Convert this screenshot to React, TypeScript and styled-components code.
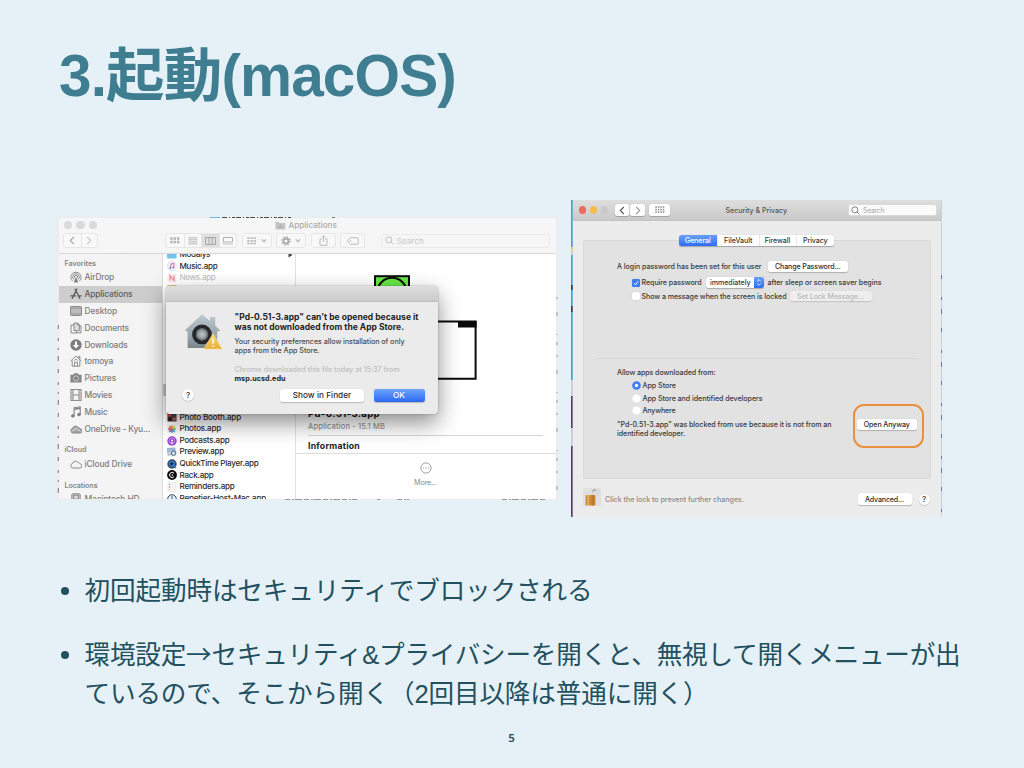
import React, { useLayoutEffect, useRef, useState } from "react";
import styled, { createGlobalStyle, css } from "styled-components";

const Global = createGlobalStyle`
  * { box-sizing: border-box; }
  html, body { margin: 0; padding: 0; }
  body { width: 1024px; height: 768px; overflow: hidden; background: #e6f1f7; }
  svg { display: block; flex: none; }
`;

const ui = `Inter, Roboto, "Liberation Sans", sans-serif`;
const ja = `"Liberation Sans", "Noto Sans CJK JP", sans-serif`;

/* ---------- text set to a fixed measure ---------- */

const Measure = styled.span`
  display: inline-block;
  white-space: pre;
`;

function Fit({ w, children }: { w: number; children: React.ReactNode }) {
  const ref = useRef<HTMLSpanElement>(null);
  const [spacing, setSpacing] = useState(0);
  useLayoutEffect(() => {
    const el = ref.current;
    if (el) setSpacing((w - el.getBoundingClientRect().width) / (el.textContent ?? " ").length);
  }, []);
  return (
    <Measure ref={ref} style={{ letterSpacing: spacing }}>
      {children}
    </Measure>
  );
}

/* ---------- slide ---------- */

const Slide = styled.main`
  width: 1024px;
  height: 768px;
  display: flex;
  flex-direction: column;
  background: #e6f1f7;
  color: #22505e;
  font-family: ${ja};
`;

const Title = styled.h1`
  margin: 0;
  height: 200px;
  padding: 33px 0 0 59px;
  font-size: 58.5px;
  line-height: 86px;
  font-weight: 700;
  color: #3f7d90;
  white-space: nowrap;
`;

const Shots = styled.section`
  display: flex;
  align-items: flex-start;
  height: 317px;
  padding-left: 57px;
`;

const Bullets = styled.ul`
  list-style: none;
  margin: 0;
  padding: 55px 0 0 58px;
  height: 211px;
`;

const Bullet = styled.li`
  display: flex;
  font-size: 25.6px;
  line-height: 38.4px;
  margin-bottom: 26px;
`;

const Dot = styled.span`
  width: 8px;
  height: 8px;
  margin: 14.5px 16px 0 2.5px;
  border-radius: 50%;
  background: #22505e;
  flex: none;
`;

const Arrow = styled.span`
  font-family: "Noto Sans CJK JP", sans-serif;
  line-height: 1;
`;

const Lines = styled.div`
  display: flex;
  flex-direction: column;
  align-items: flex-start;
`;

const PageNumber = styled.footer`
  text-align: center;
  font: 600 11.5px/20px "Noto Sans", sans-serif;
  padding-right: 1px;
`;

/* ---------- Finder window ---------- */

const FinderShot = styled.div`
  position: relative;
  width: 501px;
  height: 283px;
  margin-top: 17px;
  padding: 1px 2px 1px 2px;
  overflow: hidden;
  background: #ececee;
  font-family: ${ui};
`;

const Slivers = styled.svg`
  position: absolute;
  inset: 0;
`;

const FinderWindow = styled.div`
  position: relative;
  height: 281px;
  display: flex;
  flex-direction: column;
  background: #fff;
  border-radius: 4px 4px 2px 2px;
  overflow: hidden;
`;

const FinderHead = styled.div`
  height: 36px;
  background: #f6f6f6;
  border-bottom: 1px solid #d6d6d6;
`;

const FinderTitleRow = styled.div`
  display: flex;
  align-items: center;
  height: 14.5px;
  padding-left: 4.5px;
  font-size: 8.2px;
  font-weight: 500;
  color: #ababab;
`;

const Light = styled.i<{ $size: number; $gap: number; $color: string }>`
  width: ${(p) => p.$size}px;
  height: ${(p) => p.$size}px;
  margin-right: ${(p) => p.$gap}px;
  border-radius: 50%;
  background: ${(p) => p.$color};
`;

const FolderSlot = styled.span`
  margin: 0 2px 0 178px;
`;

const Toolbar = styled.div`
  display: flex;
  align-items: center;
  height: 16px;
  padding-left: 4px;
`;

const ToolGroup = styled.div<{ $ml?: number }>`
  display: flex;
  height: 15px;
  margin-left: ${(p) => p.$ml ?? 0}px;
  border: 1px solid #e6e6e6;
  border-radius: 3px;
  overflow: hidden;
  background: #f8f8f8;
`;

const Tool = styled.span<{ $w: number; $on?: boolean }>`
  width: ${(p) => p.$w}px;
  display: flex;
  align-items: center;
  justify-content: center;
  gap: 4px;
  background: ${(p) => (p.$on ? "#dfdfdf" : "transparent")};
  & + & {
    border-left: 1px solid #e6e6e6;
  }
`;

const FinderSearch = styled.div`
  display: flex;
  align-items: center;
  gap: 3px;
  width: 169px;
  height: 14px;
  margin-left: 15.5px;
  padding-left: 3px;
  border: 1px solid #ebebeb;
  border-radius: 3px;
  font-size: 8.2px;
  color: #c8c8c8;
`;

const FinderBody = styled.div`
  display: flex;
  flex: 1;
  min-height: 0;
`;

const Sidebar = styled.div`
  width: 104px;
  overflow: hidden;
  background: linear-gradient(90deg, #f5f5f5, #f3f3f3);
  border-right: 1px solid #dcdcdc;
`;

const SideHeading = styled.div<{ $mt: number }>`
  margin-top: ${(p) => p.$mt}px;
  height: 12px;
  padding-left: 5.5px;
  font-size: 7.1px;
  line-height: 13px;
  font-weight: 600;
  color: #858585;
`;

const SideItem = styled.div<{ $on?: boolean }>`
  display: flex;
  align-items: center;
  height: 16.8px;
  padding-left: 11px;
  gap: 2.5px;
  font-size: 8.4px;
  font-weight: 500;
  color: #7c7c7c;
  ${(p) =>
    p.$on &&
    css`
      background: #cdcdcd;
      color: #5c5c5c;
    `}
`;

const Column = styled.div`
  width: 133px;
  overflow: hidden;
  background: #fff;
  border-right: 1px solid #e2e2e2;
`;

const ColumnInner = styled.div`
  margin-top: -5px;
`;

const FileRow = styled.div<{ $dim?: boolean }>`
  display: flex;
  align-items: center;
  height: 11.62px;
  padding-left: 4px;
  gap: 2.5px;
  font-size: 8.1px;
  font-weight: 500;
  line-height: 11.62px;
  color: ${(p) => (p.$dim ? "#c4c4c4" : "#2c2c2c")};
  svg:last-child {
    margin-left: 75px;
  }
`;

const HiddenRows = styled.div`
  height: 116.2px;
  padding-top: 88.5px;
`;

const SelectedRow = styled.div`
  height: 11.6px;
  background: #c9c9c9;
`;

const Preview = styled.div`
  flex: 1;
  display: flex;
  flex-direction: column;
  padding-left: 12px;
`;

const PreviewArt = styled.div`
  height: 152.5px;
  padding-left: 66px;
`;

const AppName = styled.div`
  font-size: 9.5px;
  line-height: 14px;
  font-weight: 700;
  color: #111;
`;

const AppKind = styled.div`
  height: 15.5px;
  width: 235px;
  border-bottom: 1px solid #d6d6d6;
  font-size: 7.5px;
  line-height: 12px;
  font-weight: 500;
  color: #949494;
`;

const Info = styled.div`
  height: 17.5px;
  padding-top: 3px;
  margin-left: -12px;
  padding-left: 12px;
  border-bottom: 1px solid #dedede;
  font-size: 8.7px;
  line-height: 14px;
  font-weight: 700;
  color: #222;
`;

const More = styled.div`
  display: flex;
  flex-direction: column;
  align-items: center;
  padding: 8.5px 13px 0 0;
  gap: 4px;
  font-size: 7.3px;
  line-height: 9px;
  color: #8c8c8c;
`;

/* ---------- Gatekeeper alert ---------- */

const Alert = styled.div`
  position: absolute;
  left: 109px;
  top: 69px;
  width: 271.5px;
  height: 128px;
  border-radius: 4px;
  background: #ebebeb;
  box-shadow: 0 9px 22px rgba(0, 0, 0, 0.45), 0 0 2px rgba(0, 0, 0, 0.3);
`;

const AlertBar = styled.div`
  height: 15.5px;
  border-radius: 4px 4px 0 0;
  background: linear-gradient(#dedede, #cbcbcb);
  border-bottom: 1px solid #c0c0c0;
`;

const AlertMain = styled.div`
  display: flex;
  height: 84px;
  padding: 10.3px 0 0 17.5px;
`;

const AlertText = styled.div`
  padding: 0 0 0 11px;
`;

const AlertHead = styled.div`
  font-size: 8.5px;
  line-height: 10.6px;
  font-weight: 700;
  color: #232323;
  height: 25.4px;
`;

const AlertBodyText = styled.div`
  font-size: 7.2px;
  line-height: 9.2px;
  font-weight: 500;
  color: #4a4a4a;
  height: 27.5px;
`;

const AlertNote = styled.div`
  font-size: 7.2px;
  line-height: 9px;
  font-weight: 500;
  color: #c0c0c0;
  b {
    color: #222;
  }
`;

const AlertActions = styled.div`
  display: flex;
  align-items: center;
  height: 19px;
  padding-left: 16px;
`;

const AlertLabel = styled.span`
  font-size: 8.2px;
  font-weight: 500;
`;

const Help = styled.span<{ $s: number; $ml?: number }>`
  width: ${(p) => p.$s}px;
  height: ${(p) => p.$s}px;
  margin-left: ${(p) => p.$ml ?? 0}px;
  border-radius: 50%;
  background: #fff;
  box-shadow: 0 0.5px 1px rgba(0, 0, 0, 0.3);
  font-size: 8px;
  line-height: ${(p) => p.$s}px;
  font-weight: 500;
  text-align: center;
  color: #444;
`;

const Button = styled.span<{ $w: number; $h: number; $ml?: number; $kind?: "primary" | "off" }>`
  width: ${(p) => p.$w}px;
  height: ${(p) => p.$h}px;
  margin-left: ${(p) => p.$ml ?? 0}px;
  display: flex;
  align-items: center;
  justify-content: center;
  flex: none;
  border-radius: 2.5px;
  background: #fff;
  color: #2c2c2c;
  box-shadow: 0 0.5px 1px rgba(0, 0, 0, 0.22);
  ${(p) =>
    p.$kind === "primary" &&
    css`
      background: linear-gradient(#6ea5fb, #2b68f3);
      color: #fff;
    `}
  ${(p) =>
    p.$kind === "off" &&
    css`
      background: #eeeeee;
      color: #b9b9b9;
      box-shadow: 0 0.5px 1px rgba(0, 0, 0, 0.14);
    `}
`;

/* ---------- Security & Privacy window ---------- */

const PrefShot = styled.div`
  position: relative;
  width: 371px;
  height: 317px;
  margin-left: 13px;
  padding: 0 1px 0 1.5px;
  background: #c9d0d6;
  font-family: ${ui};
  font-size: 7.1px;
  font-weight: 500;
  color: #383838;
`;

const PrefWindow = styled.div`
  position: relative;
  height: 317px;
  display: flex;
  flex-direction: column;
  background: #ececec;
  border-radius: 3px 3px 0 0;
  overflow: hidden;
`;

const PrefBar = styled.div`
  display: flex;
  align-items: center;
  height: 21px;
  padding-left: 6px;
  background: linear-gradient(#dedede, #cacaca);
  border-bottom: 1px solid #c2c2c2;
`;

const PrefTitle = styled.span`
  margin-left: 55px;
  color: #555;
  font-weight: 500;
`;

const PrefSearch = styled.div`
  display: flex;
  align-items: center;
  gap: 3px;
  width: 89.5px;
  height: 12.5px;
  margin-left: 61px;
  padding-left: 2px;
  border-radius: 2.5px;
  background: #fbfbfb;
  border: 1px solid #dadada;
  font-size: 7px;
  color: #b5b5b5;
`;

const Panel = styled.div`
  width: 347.5px;
  height: 238.5px;
  margin: 19px 0 0 10.5px;
  border: 1px solid #dadada;
  border-radius: 2px;
  background: #e2e2e2;
`;

const Tabs = styled.div`
  display: flex;
  width: 155.5px;
  height: 11.5px;
  margin: -6.5px 0 0 94.5px;
  border-radius: 2.5px;
  overflow: hidden;
  background: #fff;
  box-shadow: 0 0.5px 1px rgba(0, 0, 0, 0.28);
`;

const Tab = styled.span<{ $w: number; $on?: boolean }>`
  width: ${(p) => p.$w}px;
  display: flex;
  align-items: center;
  justify-content: center;
  font-weight: 500;
  border-right: 1px solid #e8e8e8;
  &:last-child {
    border-right: 0;
  }
  ${(p) =>
    p.$on &&
    css`
      background: linear-gradient(#6aa0fb, #2f6cf4);
      color: #fff;
    `}
`;

const PrefRow = styled.div<{ $h: number; $pl: number; $mt?: number }>`
  display: flex;
  align-items: center;
  height: ${(p) => p.$h}px;
  padding-left: ${(p) => p.$pl}px;
  margin-top: ${(p) => p.$mt ?? 0}px;
`;

const Check = styled.span<{ $on?: boolean }>`
  width: 8px;
  height: 8px;
  margin-right: 1.5px;
  border-radius: 1.5px;
  background: ${(p) => (p.$on ? "#3e7bf6" : "#fff")};
  box-shadow: 0 0 1px rgba(0, 0, 0, 0.3);
`;

const RadioMark = styled.svg`
  margin-right: 1.5px;
`;

const Radio = ({ on }: { on?: boolean }) => (
  <RadioMark width="9" height="9" viewBox="0 0 9 9">
    <circle cx="4.5" cy="4.5" r="4.3" fill={on ? "#3f7cf7" : "#fff"} stroke={on ? "none" : "#d8d8d8"} strokeWidth="0.3" />
    {on && <circle cx="4.5" cy="4.5" r="1.7" fill="#fff" />}
  </RadioMark>
);

const Popup = styled.span`
  display: flex;
  align-items: center;
  justify-content: space-between;
  width: 58px;
  height: 11px;
  margin: 0 4px 0 4px;
  padding-left: 4.5px;
  border-radius: 2.5px;
  overflow: hidden;
  background: #fff;
  box-shadow: 0 0.5px 1px rgba(0, 0, 0, 0.25);
`;

const PopupArrow = styled.span`
  width: 9.5px;
  height: 11px;
  display: flex;
  align-items: center;
  justify-content: center;
  background: linear-gradient(#6aa0fb, #2f6cf4);
`;

const Rule = styled.hr`
  width: 322px;
  height: 1px;
  margin: 55.5px 0 0 12px;
  border: 0;
  background: #d8d8d8;
`;

const PrefFoot = styled.div`
  display: flex;
  align-items: center;
  height: 24px;
  margin-top: 8.5px;
  padding-left: 10.5px;
`;

const LockBox = styled.span`
  width: 18px;
  height: 18px;
  margin: -5px 4px 0 0;
  border-radius: 2px;
  background: #dfdfdf;
`;

const FootNote = styled.span`
  color: #8a8a8a;
`;

const Ring = styled.div`
  position: absolute;
  left: 282px;
  top: 204px;
  width: 70.5px;
  height: 43.5px;
  border: 2px solid #e8923f;
  border-radius: 11px;
`;

/* ---------- drawings ---------- */

const SideIcon = ({ name }: { name: string }) => (
  <svg width="12" height="12" viewBox="0 0 12 12" fill="none" stroke="#808080" strokeWidth="0.9">
    {name === "airdrop" && (
      <>
        <path d="M2.7 10.2A5.1 5.1 0 1 1 9.3 10.2" />
        <path d="M3.8 8.6A3.3 3.3 0 1 1 8.2 8.6" />
        <path d="M5 7.2A1.6 1.6 0 1 1 7 7.2" />
        <path d="M6 5.8L3.9 11.4H8.1Z" fill="#7c7c7c" stroke="none" />
      </>
    )}
    {name === "apps" && (
      <g stroke="#5c5c5c" strokeWidth="1.3" strokeLinecap="round">
        <path d="M6.8 1.2L2.2 10.4M5.2 1.2L9.8 10.4M0.8 7.9H5.6M8.3 7.9H11.2" />
      </g>
    )}
    {name === "desktop" && (
      <>
        <rect x="0.5" y="1.5" width="11" height="9" rx="0.8" fill="#bcbcbc" />
        <path d="M1 3.2H11.2M1.5 9H11" strokeWidth="0.6" />
      </>
    )}
    {name === "docs" && (
      <>
        <path d="M4 1H7.6L9.4 3V8.6H4Z" fill="#dedede" />
        <path d="M4 3H1V11H6.6V8.6M7.6 1V3H9.4M9.4 3.8H11V10.8H6.6" />
      </>
    )}
    {name === "downloads" && (
      <>
        <circle cx="6" cy="6" r="5.7" fill="#7c7c7c" stroke="none" />
        <path d="M6 2.4V7" stroke="#fff" strokeWidth="2" />
        <path d="M2.8 6H9.2L6 9.5Z" fill="#fff" stroke="none" />
      </>
    )}
    {name === "home" && (
      <>
        <path d="M0.6 6.2L6 1L11.4 6.2M2.2 5.4V11.2H9.8V5.4M8.8 3.2V1.4H9.9V4.4" />
        <path d="M4.6 11V7.2H7.4V11M4.4 5.6L6 4L7.6 5.6" />
      </>
    )}
    {name === "camera" && (
      <>
        <path d="M0.4 2.8H3.2L4.2 1.2H7.8L8.8 2.8H11.6V10.4H0.4Z" fill="#858585" stroke="none" />
        <circle cx="6" cy="6.4" r="2.6" stroke="#d8d8d8" strokeWidth="0.8" />
      </>
    )}
    {name === "film" && (
      <>
        <rect x="0.9" y="0.6" width="10.2" height="10.8" />
        <path d="M3 1V11.2M9 1V11.2M3 6H9" />
        <path d="M2 1V11.2M10 1V11.2" strokeDasharray="1 1" />
      </>
    )}
    {name === "note" && (
      <>
        <path d="M4.1 9.4V1.8L10.2 0.8V8.2" strokeWidth="1.1" />
        <path d="M4.1 3.2L10.2 2.2" strokeWidth="1.4" />
        <ellipse cx="2.9" cy="9.9" rx="1.5" ry="1.2" fill="#7c7c7c" />
        <ellipse cx="9" cy="8.6" rx="1.5" ry="1.2" fill="#7c7c7c" />
      </>
    )}
    {(name === "onedrive" || name === "cloud") && (
      <path
        d="M2.8 10H9.6A2.1 2.1 0 0 0 10 5.8A2.2 2.2 0 0 0 8 4.4A3.1 3.1 0 0 0 2.5 5.5A2.3 2.3 0 0 0 2.8 10Z"
        fill={name === "onedrive" ? "#a6a6a6" : "none"}
      />
    )}
    {name === "onedrive" && <path d="M1.5 8.2L6.3 5.6L10.8 8.3" stroke="#f0f0f0" strokeWidth="0.7" />}
    {name === "disk" && (
      <>
        <rect x="1.8" y="0.8" width="8.4" height="10.6" rx="1" fill="#d5d5d5" />
        <rect x="3.6" y="2.2" width="4.8" height="4" />
        <path d="M2 8.4H10" />
      </>
    )}
  </svg>
);

const AppIcon = ({ name }: { name: string }) => (
  <svg width="10" height="10" viewBox="0 0 10 10">
    {name === "folder" && <rect x="0" y="0" width="9.6" height="8.6" rx="0.8" fill="#77c3ee" />}
    {name === "music" && (
      <>
        <circle cx="5" cy="5" r="4.5" fill="#f3f0f7" stroke="#c9c4d8" strokeWidth="0.5" />
        <path d="M3.9 7V3L6.9 2.4V6.3" fill="none" stroke="#c3559b" strokeWidth="0.8" />
        <circle cx="3.3" cy="7" r="0.9" fill="#4a86e8" />
        <circle cx="6.3" cy="6.4" r="0.9" fill="#e0476f" />
      </>
    )}
    {name === "news" && (
      <>
        <rect x="0.5" y="0.5" width="9" height="9" rx="2" fill="#fbecee" />
        <path d="M3 7.4V2.8L7 7.2V2.6" fill="none" stroke="#ee9aa6" strokeWidth="1.5" />
      </>
    )}
    {name === "notes" && (
      <>
        <rect x="1" y="0.7" width="8" height="9" fill="#fff" stroke="#bbb" strokeWidth="0.5" />
        <rect x="0.8" y="0.5" width="8.4" height="3.2" fill="#eeb93f" />
      </>
    )}
    {name === "booth" && (
      <>
        <rect x="0.5" y="0.5" width="9" height="9" fill="#5a2b2b" />
        <rect x="1.2" y="1" width="3.2" height="3.6" fill="#c94a40" />
        <rect x="5.2" y="1.4" width="3.6" height="3.4" fill="#36455e" />
        <rect x="1.5" y="5.6" width="3" height="3" fill="#231f25" />
        <rect x="5.4" y="5.4" width="3.4" height="3.2" fill="#9c6a61" />
      </>
    )}
    {name === "photos" && (
      <>
        <rect x="0.3" y="0.3" width="9.4" height="9.4" rx="2" fill="#f7f7f7" />
        {["#f3a33a", "#e8d44d", "#8cc751", "#4fb3a8", "#5b7fd6", "#a065c4", "#e0567f", "#ee6a45"].map((c, i) => (
          <ellipse key={c} cx="5" cy="2.9" rx="1.2" ry="2" fill={c} opacity="0.88" transform={`rotate(${i * 45} 5 5)`} />
        ))}
      </>
    )}
    {name === "podcasts" && (
      <>
        <circle cx="5" cy="5" r="4.7" fill="#9a3fd2" />
        <circle cx="5" cy="4.6" r="2.8" fill="none" stroke="#e8d0f5" strokeWidth="0.6" />
        <circle cx="5" cy="4.4" r="1" fill="#fff" />
        <rect x="4.4" y="5.8" width="1.2" height="2.6" rx="0.6" fill="#fff" />
      </>
    )}
    {name === "preview" && (
      <>
        <rect x="0.6" y="1.2" width="7.6" height="6.6" fill="#9fbbe0" stroke="#7188aa" strokeWidth="0.5" transform="rotate(-6 4 4)" />
        <path d="M1 6L4 4L7.6 6.6V7.6H1Z" fill="#d9d2c2" />
        <circle cx="6.6" cy="6.2" r="2.3" fill="#c9dcf0" stroke="#465a74" strokeWidth="0.9" />
      </>
    )}
    {name === "quicktime" && (
      <>
        <circle cx="5" cy="5" r="4.7" fill="#3a4a63" />
        <circle cx="4.8" cy="4.8" r="3" fill="#2f7fd8" />
        <circle cx="4.8" cy="4.8" r="1.6" fill="#1b2638" />
        <path d="M5.6 5.6L9 9" stroke="#3f7fc4" strokeWidth="1.4" />
      </>
    )}
    {name === "rack" && (
      <>
        <circle cx="5" cy="5" r="4.9" fill="#0b0b0b" />
        <path d="M7 3.2A2.6 2.6 0 1 0 7 6.8" fill="none" stroke="#fff" strokeWidth="1" />
        <circle cx="5.3" cy="5" r="0.8" fill="#fff" />
      </>
    )}
    {name === "reminders" && (
      <>
        <rect x="1" y="0.4" width="8" height="9.2" rx="0.8" fill="#fafafa" stroke="#cfcfcf" strokeWidth="0.5" />
        <circle cx="2.6" cy="2.6" r="0.7" fill="#4a8fe6" />
        <circle cx="2.6" cy="5" r="0.7" fill="#e67a4a" />
        <circle cx="2.6" cy="7.4" r="0.7" fill="#e6b64a" />
        <path d="M4.4 2.6H7.8M4.4 5H7.8M4.4 7.4H7.8" stroke="#d8d8d8" strokeWidth="0.5" />
      </>
    )}
    {name === "repetier" && (
      <>
        <circle cx="5" cy="5" r="4.3" fill="#e4eef4" stroke="#2f4a5c" strokeWidth="1" />
        <path d="M5 1.8V5.2L2.4 7.4M5 5.2L7.6 7.4" fill="none" stroke="#2d7fae" strokeWidth="1.1" />
      </>
    )}
  </svg>
);

const Chevron = ({ dir, color }: { dir: "left" | "right" | "down"; color: string }) => (
  <svg width="6" height="9" viewBox="0 0 6 9" fill="none" stroke={color} strokeWidth="1.1">
    <path d={dir === "left" ? "M4.8 1L1.3 4.5L4.8 8" : dir === "right" ? "M1.2 1L4.7 4.5L1.2 8" : "M0.8 3.4L3 5.8L5.2 3.4"} />
  </svg>
);

const Magnifier = ({ color }: { color: string }) => (
  <svg width="9" height="9" viewBox="0 0 9 9" fill="none" stroke={color} strokeWidth="0.9">
    <circle cx="3.8" cy="3.8" r="3" />
    <path d="M6 6L8.5 8.5" />
  </svg>
);

const Grid = ({ cols, rows, w, h, color }: { cols: number; rows: number; w: number; h: number; color: string }) => (
  <svg width={w} height={h}>
    {Array.from({ length: cols * rows }, (_, i) => (
      <rect
        key={i}
        x={(i % cols) * (w / cols) + 0.3}
        y={Math.floor(i / cols) * (h / rows) + 0.3}
        width={w / cols - 1}
        height={h / rows - 1}
        fill={color}
      />
    ))}
  </svg>
);

const Gatekeeper = () => (
  <svg width="40" height="40" viewBox="0 0 40 40">
    <defs>
      <linearGradient id="house" x1="0" y1="0" x2="0" y2="1">
        <stop offset="0" stopColor="#bccad0" />
        <stop offset="0.6" stopColor="#9aa7ad" />
        <stop offset="1" stopColor="#7b868b" />
      </linearGradient>
      <linearGradient id="warn" x1="0" y1="0" x2="0" y2="1">
        <stop offset="0" stopColor="#fadb72" />
        <stop offset="1" stopColor="#e8ae30" />
      </linearGradient>
      <radialGradient id="ball">
        <stop offset="0" stopColor="#c2c8cb" />
        <stop offset="0.7" stopColor="#8f989d" />
        <stop offset="1" stopColor="#4c5256" />
      </radialGradient>
    </defs>
    <path d="M0.8 18.5L18 2.2L26 9V5H31.2V13.5L36.4 18.8L33.2 19.6V36H3.6V19.6Z" fill="url(#house)" />
    <circle cx="18" cy="22.4" r="8" fill="none" stroke="#26292c" strokeWidth="3.8" />
    <circle cx="18" cy="22.4" r="6.2" fill="url(#ball)" />
    <path d="M29 21.8L38.2 37H19.8Z" fill="url(#warn)" stroke="#f3dc9a" strokeWidth="0.7" strokeLinejoin="round" />
    <path d="M29 26.4V31.8M29 33.4V34.9" stroke="#fff" strokeWidth="1.5" />
  </svg>
);

const PatchArt = () => (
  <svg width="104" height="130" viewBox="0 0 104 130">
    <rect x="1" y="22.2" width="34" height="34" fill="#66e846" stroke="#0a0a0a" strokeWidth="2" />
    <circle cx="18" cy="38.4" r="14.6" fill="#66e846" stroke="#0a0a0a" strokeWidth="2" />
    <path d="M0 67.4H101.6V124.8H0" fill="#fff" stroke="#0a0a0a" strokeWidth="2" />
    <rect x="84" y="67" width="18.6" height="6.5" fill="#0a0a0a" />
  </svg>
);

const Lock = () => (
  <svg width="18" height="18" viewBox="0 0 18 18">
    <path d="M9.4 8V4.3A2.6 2.6 0 0 1 14.6 4.3V7.6" fill="none" stroke="#d2d6d8" strokeWidth="1.5" />
    <path d="M9.6 3.6A2.6 2.6 0 0 1 12.6 1.9" fill="none" stroke="#6d7173" strokeWidth="0.9" />
    <rect x="2.6" y="7" width="9.8" height="10.6" rx="0.8" fill="#cf8b3a" />
    <rect x="4.2" y="7" width="2" height="10.6" fill="#ebb868" />
    <rect x="9.4" y="7" width="1.4" height="10.6" fill="#b87628" />
    <path d="M3 9.6H12.2M3 12.2H12.2M3 14.8H12.2" stroke="#ad6d22" strokeWidth="0.35" />
  </svg>
);

/* ---------- data ---------- */

const favorites: [string, string, number][] = [
  ["airdrop", "AirDrop", 29.5],
  ["apps", "Applications", 48],
  ["desktop", "Desktop", 32.5],
  ["docs", "Documents", 44.5],
  ["downloads", "Downloads", 43],
  ["home", "tomoya", 28.5],
  ["camera", "Pictures", 31.5],
  ["film", "Movies", 27.5],
  ["note", "Music", 23],
  ["onedrive", "OneDrive - Kyu...", 65.5],
];

const filesAbove: [string, string, number][] = [
  ["folder", "Modalys", 30.5],
  ["music", "Music.app", 38],
  ["news", "News.app", 36],
  ["notes", "Notes.app", 38],
];

const filesBelow: [string, string, number][] = [
  ["booth", "Photo Booth.app", 61.5],
  ["photos", "Photos.app", 41.5],
  ["podcasts", "Podcasts.app", 50],
  ["preview", "Preview.app", 44.5],
  ["quicktime", "QuickTime Player.app", 79],
  ["rack", "Rack.app", 34],
  ["reminders", "Reminders.app", 55],
  ["repetier", "Repetier-Host-Mac.app", 86.5],
];

/* ---------- views ---------- */

const Finder = () => (
  <FinderShot>
    <Slivers width="501" height="283">
      <path d="M153 0.5H163" stroke="#6db9e8" strokeWidth="1.4" />
      <path d="M165 0.5H235" stroke="#4a4a4a" strokeDasharray="5 2 1 2 3 1" />
      <path d="M275 0.5H278" stroke="#777" />
      <path d="M1.3 108V280" stroke="#777" strokeWidth="1" strokeDasharray="4 9 3 7 2 6 5 8" />
      <path d="M500 80V280" stroke="#999" strokeWidth="1" strokeDasharray="2 13 4 18 1 7 3 10" />
      <path d="M228 282.5H300M320 282.5H323M340 282.5H352M445 282.5H488" stroke="#999" strokeDasharray="5 2 2 1 7 2" />
    </Slivers>
    <FinderWindow>
      <FinderHead>
        <FinderTitleRow>
          {[0, 1, 2].map((i) => (
            <Light key={i} $size={8.3} $gap={i < 2 ? 4.5 : 0} $color="#dadada" />
          ))}
          <FolderSlot>
            <svg width="11" height="9" viewBox="0 0 11 9">
              <path d="M0.4 1H4L5 2H10.4V8.6H0.4Z" fill="#c5c5c5" />
              <path d="M5.8 3L3.8 7.4M5 3L7.2 7.4M3.2 6.2H7.8" stroke="#a9a9a9" strokeWidth="0.7" />
            </svg>
          </FolderSlot>
          <Fit w={48.5}>Applications</Fit>
        </FinderTitleRow>
        <Toolbar>
          <ToolGroup>
            <Tool $w={16.5}><Chevron dir="left" color="#a6a6a6" /></Tool>
            <Tool $w={16.5}><Chevron dir="right" color="#c9c9c9" /></Tool>
          </ToolGroup>
          <ToolGroup $ml={67}>
            <Tool $w={17.5}><Grid cols={3} rows={2} w={10} h={7} color="#b3b3b3" /></Tool>
            <Tool $w={17.5}><Grid cols={1} rows={4} w={10} h={8} color="#b5b5b5" /></Tool>
            <Tool $w={17.5} $on>
              <svg width="11" height="8" fill="none" stroke="#a6a6a6" strokeWidth="1"><path d="M0.5 0.5H10.5V7.5H0.5ZM4 1V7M7.2 1V7" /></svg>
            </Tool>
            <Tool $w={17.5}>
              <svg width="10" height="8" fill="none" stroke="#b2b2b2" strokeWidth="1"><path d="M0.5 0.5H9.5V5H0.5Z" /><path d="M0 7H10" strokeDasharray="2 0.6" /></svg>
            </Tool>
          </ToolGroup>
          <ToolGroup $ml={5}><Tool $w={28}><Grid cols={3} rows={3} w={9.5} h={8} color="#b5b5b5" /><Chevron dir="down" color="#b0b0b0" /></Tool></ToolGroup>
          <ToolGroup $ml={4}>
            <Tool $w={28}>
              <svg width="10" height="10" viewBox="0 0 10 10" fill="none" stroke="#a9a9a9">
                <circle cx="5" cy="5" r="2.5" strokeWidth="1.8" />
                <circle cx="5" cy="5" r="4.1" strokeWidth="1.3" strokeDasharray="1.6 1.62" />
              </svg>
              <Chevron dir="down" color="#b0b0b0" />
            </Tool>
          </ToolGroup>
          <ToolGroup $ml={4.5}>
            <Tool $w={23}><svg width="9" height="11" viewBox="0 0 9 11" fill="none" stroke="#b5b5b5" strokeWidth="0.9"><path d="M3 4H1V10.3H8V4H6M4.5 7V1M2.7 2.6L4.5 0.8L6.3 2.6" /></svg></Tool>
          </ToolGroup>
          <ToolGroup $ml={4.5}>
            <Tool $w={23}><svg width="12" height="8" viewBox="0 0 12 8" fill="none" stroke="#b5b5b5" strokeWidth="0.9"><path d="M3.5 0.8H10.5Q11.2 0.8 11.2 1.5V6.5Q11.2 7.2 10.5 7.2H3.5L0.7 4.8V3.2Z" /><circle cx="3.4" cy="4" r="0.5" /></svg></Tool>
          </ToolGroup>
          <FinderSearch><Magnifier color="#bcbcbc" /><Fit w={27.5}>Search</Fit></FinderSearch>
        </Toolbar>
      </FinderHead>
      <FinderBody>
        <Sidebar>
          <SideHeading $mt={3}><Fit w={31.5}>Favorites</Fit></SideHeading>
          {favorites.map(([icon, label, w]) => (
            <SideItem key={label} $on={icon === "apps"}><SideIcon name={icon} /><Fit w={w}>{label}</Fit></SideItem>
          ))}
          <SideHeading $mt={6.4}><Fit w={22}>iCloud</Fit></SideHeading>
          <SideItem><SideIcon name="cloud" /><Fit w={47.5}>iCloud Drive</Fit></SideItem>
          <SideHeading $mt={6.4}><Fit w={33}>Locations</Fit></SideHeading>
          <SideItem><SideIcon name="disk" /><Fit w={55}>Macintosh HD</Fit></SideItem>
        </Sidebar>
        <Column>
          <ColumnInner>
            {filesAbove.map(([icon, label, w]) => (
              <FileRow key={label} $dim={icon === "news"}>
                <AppIcon name={icon} />
                <Fit w={w}>{label}</Fit>
                {icon === "folder" && <svg width="5" height="6"><path d="M0.5 0.5L4.5 3L0.5 5.5Z" fill="#444" /></svg>}
              </FileRow>
            ))}
            <HiddenRows><SelectedRow /></HiddenRows>
            {filesBelow.map(([icon, label, w]) => (
              <FileRow key={label}><AppIcon name={icon} /><Fit w={w}>{label}</Fit></FileRow>
            ))}
          </ColumnInner>
        </Column>
        <Preview>
          <PreviewArt><PatchArt /></PreviewArt>
          <AppName><Fit w={72}>Pd-0.51-3.app</Fit></AppName>
          <AppKind><Fit w={77}>Application - 15.1 MB</Fit></AppKind>
          <Info><Fit w={52}>Information</Fit></Info>
          <More>
            <svg width="12" height="12" viewBox="0 0 12 12">
              <circle cx="6" cy="6" r="5.1" fill="none" stroke="#8c8c8c" strokeWidth="0.8" />
              <path d="M3.2 6H4.2M5.5 6H6.5M7.8 6H8.8" stroke="#8c8c8c" strokeWidth="1" />
            </svg>
            <Fit w={23}>More...</Fit>
          </More>
        </Preview>
      </FinderBody>
    </FinderWindow>
    <Alert>
      <AlertBar />
      <AlertMain>
        <Gatekeeper />
        <AlertText>
          <AlertHead>
            <Fit w={184}>"Pd-0.51-3.app" can’t be opened because it</Fit><br />
            <Fit w={169.5}>was not downloaded from the App Store.</Fit>
          </AlertHead>
          <AlertBodyText>
            <Fit w={170}>Your security preferences allow installation of only</Fit><br />
            <Fit w={85}>apps from the App Store.</Fit>
          </AlertBodyText>
          <AlertNote>
            <Fit w={165}>Chrome downloaded this file today at 15:37 from</Fit><br />
            <b><Fit w={51}>msp.ucsd.edu</Fit></b>
          </AlertNote>
        </AlertText>
      </AlertMain>
      <AlertActions>
        <Help $s={12}>?</Help>
        <Button $w={84} $h={13} $ml={86}><AlertLabel><Fit w={58.5}>Show in Finder</Fit></AlertLabel></Button>
        <Button $w={51} $h={13} $ml={9.5} $kind="primary"><AlertLabel><Fit w={12}>OK</Fit></AlertLabel></Button>
      </AlertActions>
    </Alert>
  </FinderShot>
);

const Security = () => (
  <PrefShot>
    <Slivers width="371" height="317">
      <path d="M0.8 0V47M0.8 55V133" stroke="#3aa5e0" strokeWidth="1.6" />
      <path d="M0.8 47V52" stroke="#e3d27a" strokeWidth="1.6" />
      <path d="M0.8 85V90M0.8 106V112" stroke="#463a48" strokeWidth="1.6" />
      <path d="M0.8 133V180" stroke="#35a7dc" strokeWidth="1.6" />
      <path d="M0.8 196V228M0.8 246V317" stroke="#5b3b66" strokeWidth="1.6" />
      <path d="M370.5 75V315" stroke="#6b7ba0" strokeWidth="1" strokeDasharray="4 18 3 9 5 14" />
    </Slivers>
    <PrefWindow>
      <PrefBar>
        <Light $size={7.4} $gap={3.8} $color="#ec6a5e" />
        <Light $size={7.4} $gap={3.8} $color="#f4be4f" />
        <Light $size={7.4} $gap={0} $color="#c9c9c9" />
        <Button $w={14.5} $h={12} $ml={6.7}><Chevron dir="left" color="#555" /></Button>
        <Button $w={14.5} $h={12} $ml={1}><Chevron dir="right" color="#999" /></Button>
        <Button $w={21} $h={12} $ml={4.5}><Grid cols={4} rows={3} w={10} h={7.5} color="#888" /></Button>
        <PrefTitle><Fit w={61.5}>Security & Privacy</Fit></PrefTitle>
        <PrefSearch><Magnifier color="#777" /><Fit w={21.5}>Search</Fit></PrefSearch>
      </PrefBar>
      <Panel>
        <Tabs>
          <Tab $w={39.5} $on><Fit w={26}>General</Fit></Tab>
          <Tab $w={41.5}><Fit w={28.5}>FileVault</Fit></Tab>
          <Tab $w={37}><Fit w={25.5}>Firewall</Fit></Tab>
          <Tab $w={37.5}><Fit w={24.5}>Privacy</Fit></Tab>
        </Tabs>
        <PrefRow $h={13} $pl={33} $mt={14}>
          <Fit w={144.5}>A login password has been set for this user</Fit>
          <Button $w={80.5} $h={11} $ml={6}><Fit w={65.5}>Change Password...</Fit></Button>
        </PrefRow>
        <PrefRow $h={14} $pl={48} $mt={2.6}>
          <Check $on>
            <svg width="8" height="8" fill="none" stroke="#fff" strokeWidth="1"><path d="M2 4.2L3.5 5.8L6.2 2.2" /></svg>
          </Check>
          <Fit w={60}>Require password</Fit>
          <Popup>
            <Fit w={40.5}>immediately</Fit>
            <PopupArrow>
              <svg width="6" height="9" fill="none" stroke="#fff" strokeWidth="0.9"><path d="M1.2 3.4L3 1.6L4.8 3.4M1.2 5.6L3 7.4L4.8 5.6" /></svg>
            </PopupArrow>
          </Popup>
          <Fit w={114}>after sleep or screen saver begins</Fit>
        </PrefRow>
        <PrefRow $h={13} $pl={48}>
          <Check />
          <Fit w={145}>Show a message when the screen is locked</Fit>
          <Button $w={82} $h={10.5} $ml={3} $kind="off"><Fit w={67}>Set Lock Message...</Fit></Button>
        </PrefRow>
        <Rule />
        <PrefRow $h={12} $pl={33} $mt={7.3}><Fit w={98.5}>Allow apps downloaded from:</Fit></PrefRow>
        <PrefRow $h={12.2} $pl={48} $mt={1.4}><Radio on /><Fit w={33.5}>App Store</Fit></PrefRow>
        <PrefRow $h={12.2} $pl={48}><Radio /><Fit w={120}>App Store and identified developers</Fit></PrefRow>
        <PrefRow $h={12.2} $pl={48}><Radio /><Fit w={33}>Anywhere</Fit></PrefRow>
        <PrefRow $h={12} $pl={33} $mt={1.9}>
          <Fit w={214.5}>"Pd-0.51-3.app" was blocked from use because it is not from an</Fit>
          <Button $w={60.5} $h={11} $ml={25}><Fit w={46}>Open Anyway</Fit></Button>
        </PrefRow>
        <PrefRow $h={8} $pl={33} $mt={-1.2}><Fit w={68}>identified developer.</Fit></PrefRow>
      </Panel>
      <PrefFoot>
        <LockBox><Lock /></LockBox>
        <FootNote><Fit w={139}>Click the lock to prevent further changes.</Fit></FootNote>
        <Button $w={54} $h={11.5} $ml={113.5}><Fit w={39}>Advanced...</Fit></Button>
        <Help $s={11} $ml={7}>?</Help>
      </PrefFoot>
    </PrefWindow>
    <Ring />
  </PrefShot>
);

export default function App() {
  return (
    <>
      <Global />
      <Slide>
        <Title><Fit w={397}>3.起動(macOS)</Fit></Title>
        <Shots>
          <Finder />
          <Security />
        </Shots>
        <Bullets>
          <Bullet>
            <Dot />
            <Lines><Fit w={508}>初回起動時はセキュリティでブロックされる</Fit></Lines>
          </Bullet>
          <Bullet>
            <Dot />
            <Lines>
              <Fit w={876}>環境設定<Arrow>→</Arrow>セキュリティ&プライバシーを開くと、無視して開くメニューが出</Fit>
              <Fit w={624}>ているので、そこから開く（2回目以降は普通に開く）</Fit>
            </Lines>
          </Bullet>
        </Bullets>
        <PageNumber>5</PageNumber>
      </Slide>
    </>
  );
}
